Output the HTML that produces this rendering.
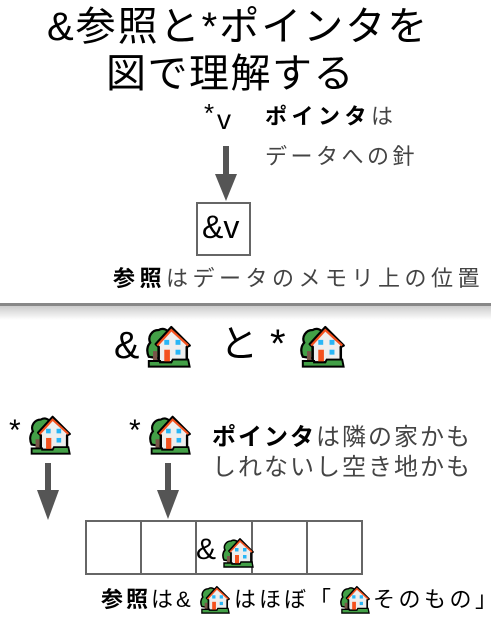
<!DOCTYPE html>
<html><head><meta charset="utf-8"><style>
body{margin:0;width:491px;height:617px;background:#fff;position:relative;overflow:hidden;font-family:"Liberation Sans","Noto Sans CJK JP",sans-serif;color:#000}
.a{position:absolute;white-space:nowrap;line-height:1}
svg.h{position:absolute}
b{font-weight:bold}
.g{color:#444}
</style></head><body>
<svg width="0" height="0" style="position:absolute"><defs>
<g id="house">
<path d="M2 24 C0 20 1 16 3 14 C1 10 4 5 9 5 C12 3 16 5 17 8 L14 26 Z" fill="#43a047" stroke="#000" stroke-width="1.6"/>
<rect x="5" y="20" width="3" height="8" fill="#795548"/>
<path d="M7 15 L18 3 L31 16 L29 17 L29 28 L9 28 L9 17 Z" fill="#eee" stroke="#000" stroke-width="1.8" stroke-linejoin="round"/>
<path d="M8 16 L18 5 L30 16" fill="none" stroke="#f4511e" stroke-width="1.6"/>
<rect x="13" y="12" width="3.5" height="3.5" fill="#29b6f6"/><rect x="21" y="12" width="3.5" height="3.5" fill="#29b6f6"/>
<rect x="21" y="19" width="3.5" height="3.5" fill="#29b6f6"/>
<rect x="13" y="19" width="4" height="9" fill="#f4511e"/>
<path d="M2 31 L2 27 L10 27 L10 28 L18 28 L19 26 L30 26 L31 31 Z" fill="#43a047" stroke="#000" stroke-width="1.4"/>
</g></defs></svg>

<div class="a" style="left:47px;top:7px;font-size:40px;letter-spacing:2px">&amp;参照と*ポインタを</div>
<div class="a" style="left:106px;top:54px;font-size:40px;letter-spacing:1.5px">図で理解する</div>
<div class="a" style="left:204px;top:100px;font-size:26px">*</div>
<div class="a" style="left:217px;top:106px;font-size:28px">v</div>
<div class="a" style="left:265px;top:106px;font-size:22px;letter-spacing:4.5px"><b>ポインタ</b><span class="g">は</span></div>
<div class="a g" style="left:265px;top:146px;font-size:22px;letter-spacing:3.5px">データへの針</div>
<div style="position:absolute;left:223px;top:146px;width:6px;height:30px;background:#555"></div>
<div style="position:absolute;left:215px;top:174px;width:0;height:0;border-left:11px solid transparent;border-right:11px solid transparent;border-top:27px solid #555"></div>
<div style="position:absolute;left:196px;top:202px;width:51px;height:50px;border:2px solid #666"></div>
<div class="a" style="left:202px;top:211px;font-size:32px">&amp;v</div>
<div class="a" style="left:113px;top:268px;font-size:22px;letter-spacing:4.5px"><b>参照</b><span class="g">はデータのメモリ上の位置</span></div>
<div style="position:absolute;left:0;top:303px;width:491px;height:3px;background:#888"></div>
<div style="position:absolute;left:0;top:306px;width:491px;height:14px;background:linear-gradient(#ccc,#fff)"></div>

<div class="a" style="left:114px;top:327px;font-size:38px">&amp;</div>
<svg class="h" style="left:146px;top:323px" width="45" height="45" viewBox="0 0 32 32"><use href="#house"/></svg>
<div class="a" style="left:220px;top:326px;font-size:38px">と</div>
<div class="a" style="left:270px;top:324px;font-size:40px">*</div>
<svg class="h" style="left:300px;top:323px" width="45" height="45" viewBox="0 0 32 32"><use href="#house"/></svg>

<div class="a" style="left:9px;top:416px;font-size:30px">*</div>
<svg class="h" style="left:29px;top:413px" width="42" height="42" viewBox="0 0 32 32"><use href="#house"/></svg>
<div class="a" style="left:129px;top:416px;font-size:30px">*</div>
<svg class="h" style="left:149px;top:413px" width="42" height="42" viewBox="0 0 32 32"><use href="#house"/></svg>
<div class="a" style="left:212px;top:426px;font-size:24px;letter-spacing:2px"><b>ポインタ</b><span class="g">は隣の家かも</span></div>
<div class="a g" style="left:212px;top:456px;font-size:24px;letter-spacing:2px">しれないし空き地かも</div>

<div style="position:absolute;left:45px;top:463px;width:6px;height:30px;background:#555"></div>
<div style="position:absolute;left:37px;top:490px;border-left:11px solid transparent;border-right:11px solid transparent;border-top:30px solid #555"></div>
<div style="position:absolute;left:165px;top:463px;width:6px;height:30px;background:#555"></div>
<div style="position:absolute;left:157px;top:490px;border-left:11px solid transparent;border-right:11px solid transparent;border-top:29px solid #555"></div>

<div style="position:absolute;left:85px;top:520px;width:276px;height:51px;border:2px solid #666;border-right:none;display:flex">
<div style="flex:1;border-right:2px solid #666"></div><div style="flex:1;border-right:2px solid #666"></div><div style="flex:1;border-right:2px solid #666"></div><div style="flex:1;border-right:2px solid #666"></div><div style="flex:1;border-right:2px solid #666"></div>
</div>
<div class="a" style="left:196px;top:535px;font-size:30px">&amp;</div>
<svg class="h" style="left:222px;top:536px" width="32" height="32" viewBox="0 0 32 32"><use href="#house"/></svg>

<div class="a" style="left:101px;top:589px;font-size:22px;letter-spacing:3px"><b>参照</b>は&amp;</div>
<svg class="h" style="left:200px;top:584px" width="30" height="30" viewBox="0 0 32 32"><use href="#house"/></svg>
<div class="a" style="left:234px;top:589px;font-size:22px;letter-spacing:3px">はほぼ「</div>
<svg class="h" style="left:340px;top:584px" width="30" height="30" viewBox="0 0 32 32"><use href="#house"/></svg>
<div class="a" style="left:373px;top:589px;font-size:22px;letter-spacing:3.5px">そのもの」</div>
</body></html>
